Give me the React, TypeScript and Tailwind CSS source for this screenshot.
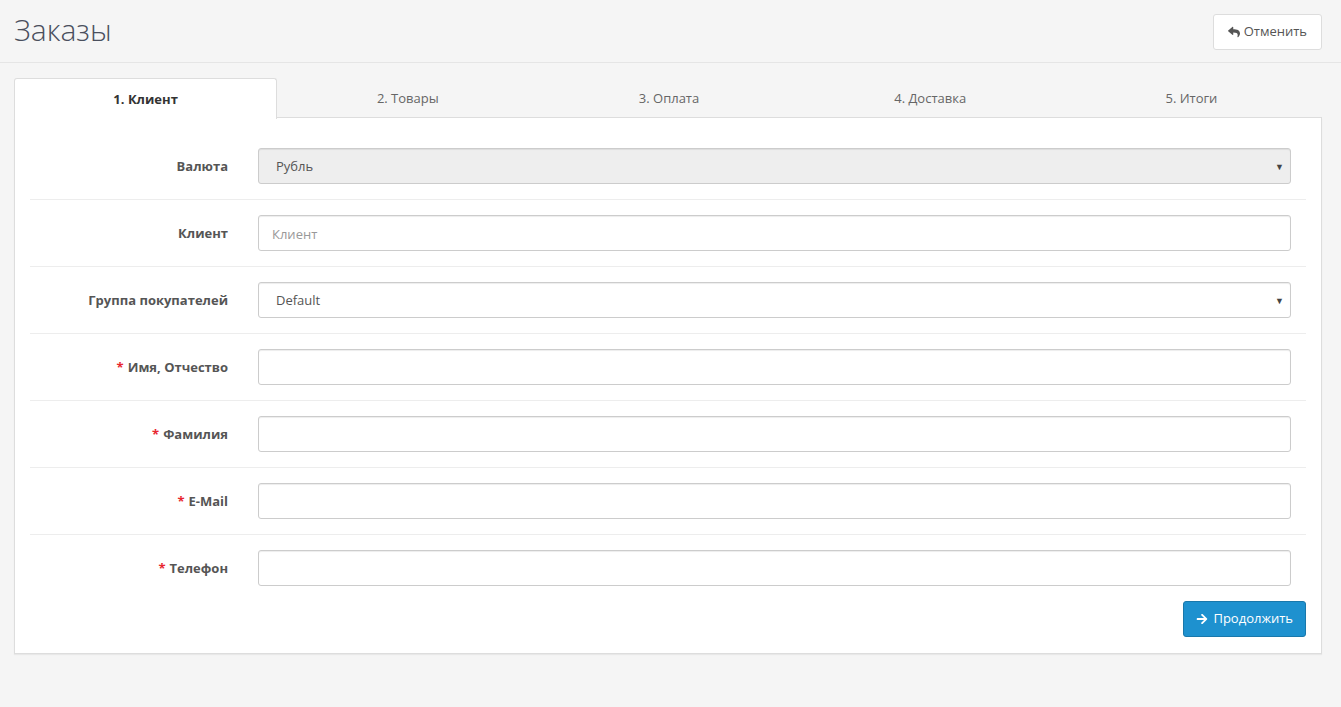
import { FaReply, FaArrowRight } from "react-icons/fa";

const tabs = ["1. Клиент", "2. Товары", "3. Оплата", "4. Доставка", "5. Итоги"];

interface Row {
  label: string;
  required?: boolean;
  kind: "select" | "input";
  value?: string;
  placeholder?: string;
  disabled?: boolean;
}

const rows: Row[] = [
  { label: "Валюта", kind: "select", value: "Рубль", disabled: true },
  { label: "Клиент", kind: "input", placeholder: "Клиент" },
  { label: "Группа покупателей", kind: "select", value: "Default" },
  { label: "Имя, Отчество", kind: "input", required: true },
  { label: "Фамилия", kind: "input", required: true },
  { label: "E-Mail", kind: "input", required: true },
  { label: "Телефон", kind: "input", required: true },
];

export default function App() {
  return (
    <div
      className="min-h-[707px] bg-[#f5f5f5] text-[12px] text-[#666]"
      style={{ fontFamily: '"Open Sans", "Liberation Sans", sans-serif' }}
    >
      <div className="flex items-center justify-between h-[63px] pl-[14px] pr-[19px] border-b border-[#e5e5e5]">
        <h1 className="text-[30px] font-light text-[#4a4f5d] leading-none mt-[-2px]">Заказы</h1>
        <button className="flex items-center gap-[4px] h-[36px] px-[14px] bg-white border border-[#ddd] rounded-[3px] text-[13px] text-[#555] mt-[1px] ml-auto">
          <FaReply className="text-[12px] text-[#555]" />
          Отменить
        </button>
      </div>

      <div className="pl-[14px] pr-[19px] pt-[15px]">
        <div className="flex">
          {tabs.map((t, i) => (
            <div
              key={t}
              className={
                i === 0
                  ? "flex-1 h-[41px] flex items-center justify-center pt-[2px] bg-white border border-b-0 border-[#ddd] rounded-t-[3px] font-bold text-[13px] text-[#333] relative z-10"
                  : "flex-1 h-[40px] flex items-center justify-center pt-[2px] text-[13px] text-[#666] border-b border-[#ddd]"
              }
            >
              {t}
            </div>
          ))}
        </div>
        <div className="bg-white border border-t-0 border-[#ddd] px-[15px] pt-[15px] pb-[16px] -mt-[1px] shadow-[0_1px_1px_rgba(0,0,0,0.05)]">
          {rows.map((r, i) => (
            <div
              key={r.label}
              className={
                i < rows.length - 1
                  ? "flex py-[15px] border-b border-[#ededed]"
                  : "flex py-[15px]"
              }
            >
              <div className="w-[213px] pr-[15px] pt-[9px] text-right font-bold text-[13px] text-[#555]">
                {r.required && <span className="text-[#e8262f] mr-[4px]">*</span>}
                {r.label}
              </div>
              <div className="flex-1 px-[15px]">
                {r.kind === "select" ? (
                  <div
                    className={
                      r.disabled
                        ? "h-[36px] flex items-center justify-between pl-[17px] pr-[6px] pt-[2px] border border-[#ccc] rounded-[3px] bg-[#eee] text-[13px] text-[#555] shadow-[inset_0_1px_1px_rgba(0,0,0,0.075)]"
                        : "h-[36px] flex items-center justify-between pl-[17px] pr-[6px] pt-[2px] border border-[#ccc] rounded-[3px] bg-white text-[13px] text-[#555] shadow-[inset_0_1px_1px_rgba(0,0,0,0.075)]"
                    }
                  >
                    <span>{r.value}</span>
                    <span className="text-[9px] text-[#444]">▼</span>
                  </div>
                ) : (
                  <input
                    placeholder={r.placeholder}
                    className="w-full h-[36px] px-[13px] pt-[2px] border border-[#ccc] rounded-[3px] bg-white text-[13px] text-[#555] placeholder:text-[#999] outline-none shadow-[inset_0_1px_1px_rgba(0,0,0,0.075)]"
                  />
                )}
              </div>
            </div>
          ))}
          <div className="flex justify-end">
            <button className="flex items-center gap-[5px] h-[36px] px-[12px] bg-[#1e91cf] border border-[#1978ab] rounded-[3px] text-white text-[13px]">
              <FaArrowRight className="text-[12px]" />
              Продолжить
            </button>
          </div>
        </div>
      </div>
    </div>
  );
}
